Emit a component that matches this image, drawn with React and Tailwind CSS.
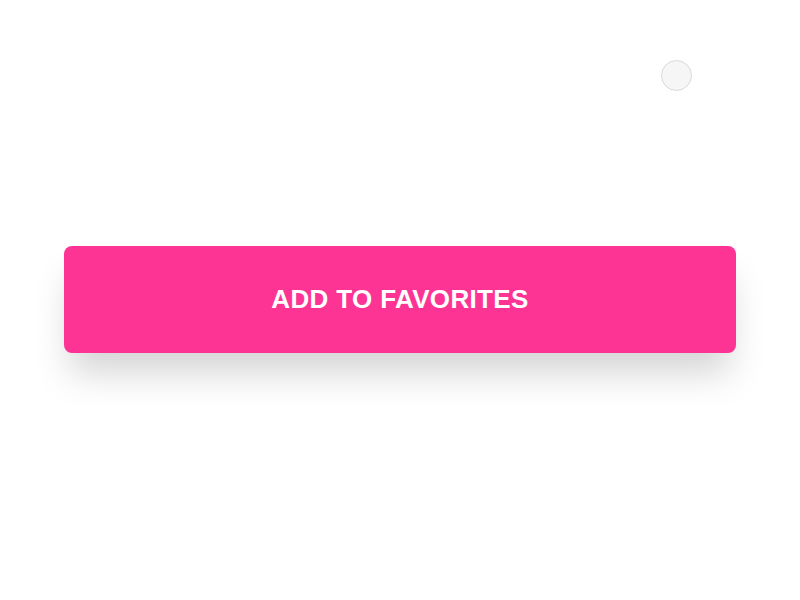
import React from 'react';

export default function App() {
    return (
        <div className="w-[800px] h-[600px] bg-white flex flex-col px-16 font-['Liberation_Sans',Arial,sans-serif]">
            {/* Small floating circle */}
            <div className="flex justify-end pt-[60px] pr-[44px]">
                <div className="w-[31px] h-[31px] rounded-full border border-[#d9d9d9] bg-[#f6f6f6]" />
            </div>

            <button
                type="button"
                className="mt-[155px] h-[107px] w-full rounded-lg bg-[#fd3494] text-white text-[26px] font-bold tracking-[0.35px] shadow-[0_26px_36px_-6px_rgba(0,0,0,0.17)]"
            >
                ADD TO FAVORITES
            </button>
        </div>
    );
}
